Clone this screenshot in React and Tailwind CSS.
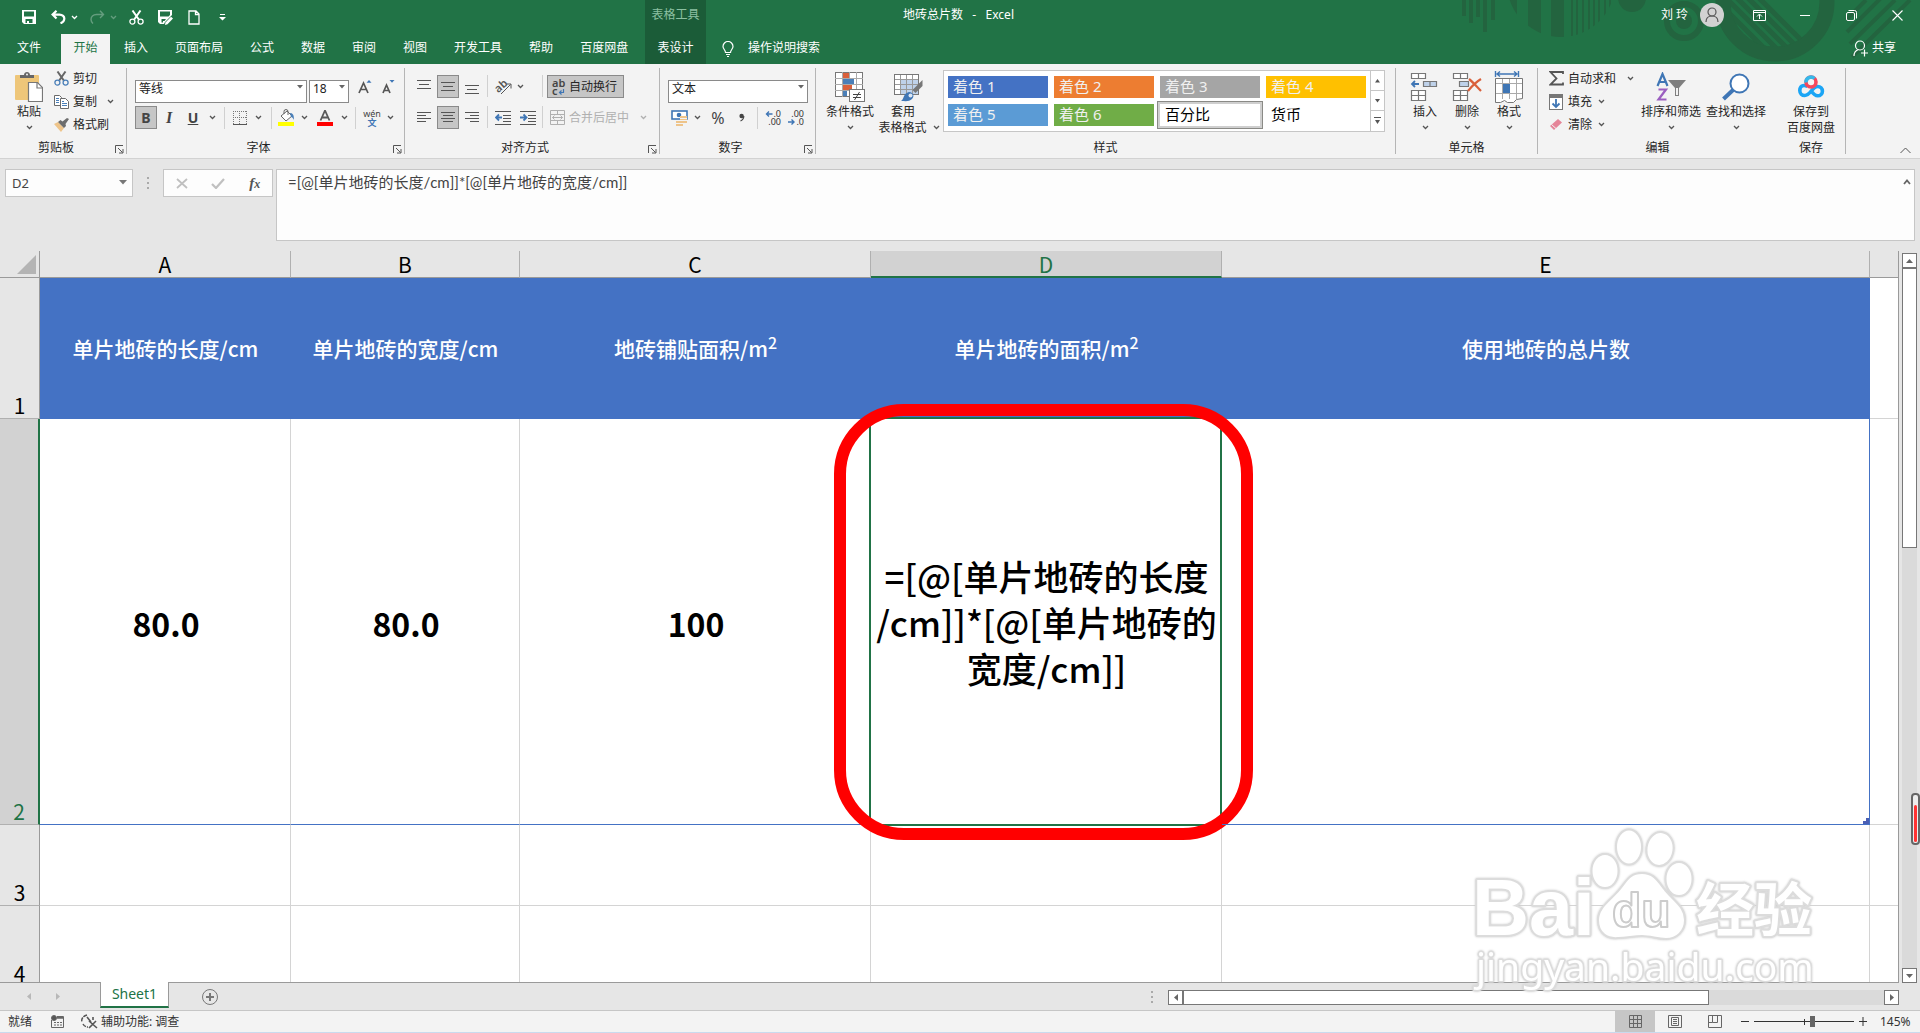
import React, { useState } from 'react';

const Chevron = ({ className = "text-[#555]" }) => (
    <svg width="7" height="5" viewBox="0 0 7 5" className={`shrink-0 ${className}`} fill="none" stroke="currentColor" strokeWidth="1.3">
        <path d="M1 1l2.5 2.5L6 1" />
    </svg>
);

const Sep = ({ className = "" }) => (
    <div className={`flex justify-center shrink-0 ${className}`}>
        <div className="w-px h-[22px] bg-[#d0d0d0]" />
    </div>
);

const IconButton = ({ label, className = "", children }) => (
    <button type="button" aria-label={label} className={`flex items-center justify-center h-[23px] shrink-0 ${className}`}>
        {children}
    </button>
);

const Group = ({ name, launcher, className = "", children }) => (
    <section aria-label={name} className={`flex shrink-0 ${className}`}>
        <div className="flex flex-col flex-1 pt-[3px]">
            <div className="flex h-[69px]">{children}</div>
            <div className="flex h-[22px]">
                <h2 className="flex-1 text-center text-xs leading-6">{name}</h2>
                {launcher && (
                    <button type="button" aria-label={`${name}设置`} className="w-[14px] pl-[3px] pt-1">
                        <svg width="9" height="9" viewBox="0 0 9 9" fill="none" stroke="#555">
                            <path d="M.5 8V.5H8M3 3l4.5 4.5M8 4v4H4" />
                        </svg>
                    </button>
                )}
            </div>
        </div>
        <div className="w-px h-[86px] mt-1 bg-[#b5b5b5]" />
    </section>
);

const BigButton = ({ icon, label, second, chevron = true, className = "" }) => (
    <button type="button" className={`flex flex-col items-center pt-[5px] text-xs leading-4 whitespace-nowrap shrink-0 ${className}`}>
        <span className="flex h-[30px] items-center mb-0.5">{icon}</span>
        <span>{label}</span>
        <span className="flex items-center h-[15px] gap-1.5">
            {second}
            {chevron && <Chevron />}
        </span>
    </button>
);

const SmallButton = ({ icon, label, chevronGap }) => (
    <button type="button" className="flex items-center h-[23px] text-xs text-left whitespace-nowrap">
        <span className="flex w-[19px] shrink-0">{icon}</span>
        {label}
        {chevronGap && <span className={chevronGap}><Chevron /></span>}
    </button>
);

/* ---------- icons ---------- */

const Scissors = ({ blade = "#666", ring = "#4a7fb8" }) => (
    <svg width="15" height="15" viewBox="0 0 15 15" fill="none">
        <path d="M3.5 0.5L9.8 9.5M11.5 0.5L5.2 9.5" stroke={blade} strokeWidth="2" />
        <circle cx="3.4" cy="11.6" r="2.5" stroke={ring} strokeWidth="1.3" />
        <circle cx="11.6" cy="11.6" r="2.5" stroke={ring} strokeWidth="1.3" />
    </svg>
);

const SaveIcon = () => (
    <svg width="14" height="14" viewBox="0 0 14 14">
        <path fillRule="evenodd" fill="#fff" d="M0 0h14v14H2l-2-2zM2 1.500v5h10v-5zM3.500 9v4h1.500v-2h2v2h3.500V9z" />
    </svg>
);

const SaveAsIcon = () => (
    <svg width="15" height="15" viewBox="0 0 15 15">
        <path fillRule="evenodd" fill="#fff" d="M0 0h14v5L7 12l-1 2H2l-2-2zM2 1.500v5h8.500L12 5V1.500zM3.500 9v3.500h1.500v-1.500h1.500L8 9z" />
        <path fill="#fff" d="M7.500 12.500l5.500-5.700L15 8.600 9.500 14.200 7 15z" />
    </svg>
);

const UndoIcon = ({ flip, className = "" }) => (
    <svg width="15" height="14" viewBox="0 0 15 14" fill="none" stroke="#fff" strokeWidth={flip ? 1.4 : 2.2} className={className}>
        {flip ? <path d="M10 .8l3.5 3.7L10 8M13.5 4.5H6.5C3 4.5 1 7 1 9.5c0 1.5.8 3 2 4" /> : <path d="M5.5 .8L1.6 4.6l3.9 3.9M2 4.6h6.5c3 0 5 2 4.8 4.4-.2 2-1.5 3.5-3.8 4.3" />}
    </svg>
);

const PasteIcon = () => (
    <svg width="28" height="30" viewBox="0 0 28 30">
        <rect x="0" y="3" width="24" height="25" rx="1" fill="#eec679" />
        <path d="M5 6V3h4c0-2 1.5-3 3-3s3 1 3 3h4v3z" fill="#666" />
        <circle cx="12" cy="2.6" r="1" fill="#f3f3f3" />
        <path d="M13.5 10.5h9l5 5v14h-14z" fill="#fff" stroke="#777" strokeWidth="1.2" />
        <path d="M22 10.5v5.5h5.5" fill="none" stroke="#777" strokeWidth="1.2" />
    </svg>
);

const CopyIcon = () => (
    <svg width="15" height="14" viewBox="0 0 15 14" fill="#fff" stroke="#6a6a6a">
        <path d="M.5 .5h5l2 2v8h-7z" />
        <path d="M6.5 3.500h5l3 3v7h-8z" />
        <path d="M2 3.500h3M2 5.500h3M2 7.500h3M8 8.500h5M8 10.500h5M8 6.500h2" stroke="#4a7fb8" />
    </svg>
);

const BrushIcon = () => (
    <svg width="16" height="14" viewBox="0 0 16 14">
        <path d="M0 6l4-2 6 6-3 4z" fill="#eec48a" />
        <path d="M4 4l2.500-2 2 1.500L13 0l2 1-3.500 5 .5 2-2 2z" fill="#6d6d6d" />
    </svg>
);

// each entry is a line: left edge, width, top
const alignments = {
    top: [[0, 14, 1], [2, 10, 5], [0, 14, 9]],
    middle: [[0, 14, 3], [2, 10, 7], [0, 14, 11]],
    bottom: [[0, 14, 6], [2, 10, 10], [0, 14, 14]],
    left: [[0, 14, 2], [0, 9, 5], [0, 14, 8], [0, 9, 11]],
    center: [[0, 14, 2], [2, 10, 5], [0, 14, 8], [2, 10, 11]],
    right: [[0, 14, 2], [5, 9, 5], [0, 14, 8], [5, 9, 11]],
};

const AlignIcon = ({ kind }) => (
    <svg width="14" height="15" viewBox="0 0 14 15" fill="#555">
        {alignments[kind].map(([x, w, y]) => <rect key={y} x={x} y={y} width={w} height="1" />)}
    </svg>
);

const IndentIcon = ({ right }) => (
    <svg width="16" height="14" viewBox="0 0 16 14" fill="none" stroke="#555">
        <path d="M0 .5h16M8 4.500h8M8 7.500h8M8 10.500h8M0 13.500h16" />
        <path d={right ? "M0 6.500h6M3.500 3.500l3 3-3 3" : "M1 6.500h6M4 3.500l-3 3 3 3"} stroke="#3f76b5" strokeWidth="1.800" />
    </svg>
);

const OrientIcon = () => (
    <svg width="17" height="16" viewBox="0 0 17 16">
        <text x="1" y="12" fontSize="11" fontWeight="600" fill="#555" transform="rotate(-42 5 10)">ab</text>
        <path d="M6 15L15.500 5.500M11.500 5h4.500v4.500" fill="none" stroke="#555" />
    </svg>
);

const WrapIcon = () => (
    <span className="relative flex flex-col w-[13px] text-[11px] leading-[8px] font-semibold text-[#444] text-left">
        <span>ab</span>
        <span>c</span>
        <svg width="7" height="6" viewBox="0 0 7 6" fill="none" className="absolute right-0 bottom-0">
            <path d="M5.500 0v3.500H1.500M3.500 1.500l-2 2 2 2" stroke="#3f76b5" strokeWidth="1.200" />
        </svg>
    </span>
);

const MergeIcon = () => (
    <svg width="15" height="15" viewBox="0 0 15 15" fill="none" stroke="#b0b0b0">
        <path d="M.5 .5h14v14H.5zM.5 4.500h14M.5 10.500h14M7.500 .5v4M7.500 10.500v4M2.500 7.500h10M4.500 5.500l-2 2 2 2M10.500 5.500l2 2-2 2" />
    </svg>
);

const BordersIcon = () => (
    <svg width="14" height="14" viewBox="0 0 14 14" fill="none" stroke="#777">
        <path d="M.5 0v13M13.500 0v13M6.500 0v13M0 .5h14M0 6.500h14" strokeDasharray="1 1" />
        <path d="M0 13.500h14" stroke="#555" />
    </svg>
);

const FillIcon = () => (
    <svg width="17" height="17" viewBox="0 0 17 17">
        <path d="M3 7l6-5 5 5-6 5z" fill="#fff" stroke="#666" />
        <path d="M6 5V2.500a2 2 0 014 0V6" fill="none" stroke="#666" />
        <path d="M12 4c3 0 4 2 4 7-1-2-2-3-3-3z" fill="#4a7fb8" />
        <rect x="0" y="13" width="16" height="4" fill="#ff0" />
    </svg>
);

const FontColorIcon = () => (
    <svg width="16" height="16" viewBox="0 0 16 16">
        <path d="M3.500 10.500L8 .5l4.500 10M5 7.500h6" fill="none" stroke="#5a5a5a" strokeWidth="1.800" />
        <rect y="12" width="16" height="4" fill="#f00" />
    </svg>
);

const FontSizeIcon = ({ small }) => (
    <svg width="14" height="15" viewBox="0 0 14 15">
        <path d={small ? "M1 14L4.500 6 8 14M2.500 11.500h4" : "M1 14L5.500 4 10 14M2.500 10.500h6"} fill="none" stroke="#555" strokeWidth="1.700" />
        <path d={small ? "M7.500 1h5L10 3.800z" : "M8.500 3.800L11 1l2.500 2.800z"} fill="#3f76b5" />
    </svg>
);

const PhoneticIcon = () => (
    <span className="flex flex-col items-center">
        <span className="text-[9px] leading-[9px] text-[#444]">wén</span>
        <span className="text-[9px] leading-[9px] font-bold text-[#3f76b5]">文</span>
    </span>
);

const CurrencyIcon = () => (
    <svg width="17" height="16" viewBox="0 0 17 16">
        <rect x="1" y="1" width="15" height="8" fill="#fff" stroke="#3f76b5" strokeWidth="1.600" />
        <circle cx="8" cy="5" r="2.300" fill="#3f76b5" />
        <path d="M9 6h7v7h-4v3H5v-5h4z" fill="#eec48a" />
        <path d="M9 8.500h7M9 10.500h7M5 13.500h7" stroke="#f3f3f3" />
    </svg>
);

const DecimalIcon = ({ less }) => (
    <span className="relative flex flex-col items-end w-4 text-[9px] leading-[8px] text-[#333]">
        <span>{less ? ".00" : ".0"}</span>
        <span>{less ? ".0" : ".00"}</span>
        <svg width="8" height="6" viewBox="0 0 8 6" fill="none" className={less ? "absolute left-0 bottom-px" : "absolute left-0 top-px"}>
            <path d={less ? "M0 3h6M3.500 .5L6 3 3.500 5.500" : "M1.500 3h6M4 .5L1.500 3 4 5.500"} stroke="#3f76b5" strokeWidth="1.400" />
        </svg>
    </span>
);

const CondIcon = () => (
    <svg width="30" height="30" viewBox="0 0 30 30">
        <rect x=".5" y=".5" width="27" height="24" fill="#fff" stroke="#777" />
        <path d="M7.500 0v25M14.500 0v25M21.500 0v25M0 6.500h28M0 12.500h28M0 18.500h28" stroke="#aaa" />
        <path d="M8 1h6v5H8zM8 13h9v5H8z" fill="#d9603b" />
        <path d="M8 7h11v5H8zM8 19h4v5H8z" fill="#4a7fb8" />
        <rect x="14.500" y="17.500" width="15" height="12" fill="#fff" stroke="#777" />
        <path d="M18 22.500h8M18 25.500h8M24.500 20l-5 8" stroke="#444" />
    </svg>
);

const TableFormatIcon = () => (
    <svg width="30" height="30" viewBox="0 0 30 30">
        <rect x=".5" y="2.500" width="24" height="20" fill="#fff" stroke="#777" />
        <rect x="7" y="8" width="17" height="14" fill="#bfd2ea" />
        <path d="M6.500 3v19M12.500 3v19M18.500 3v19M1 7.500h23M1 12.500h23M1 17.500h23" stroke="#999" />
        <path d="M28.500 8v6l-7 7-3-3z" fill="#777" />
        <path d="M7 29c3-1 2-8 8-9 4 0 6 4 3 7-3 3-7 2-11 2z" fill="#3f76b5" />
        <circle cx="16.500" cy="23.500" r="2" fill="#dbe6f3" />
    </svg>
);

const CellsIcon = ({ kind }) => {
    if (kind === "format") return (
        <svg width="30" height="32" viewBox="0 0 30 32" fill="none">
            <path d="M1.500 0v6M24.500 0v6M3 3h20M6 .5L3 3l3 2.500M20 .5L23 3l-3 2.500" stroke="#3f76b5" strokeWidth="1.400" />
            <path d="M1.500 7.500h27v20l-6 1-3 3h-6l-3-2-4 2h-5z" fill="#fff" stroke="#777" />
            <path d="M8.500 8v20M15.500 8v20M22.500 8v20M2 12.500h26M2 22.500h26" stroke="#aaa" />
            <rect x="9" y="13" width="7" height="9" fill="#3f76b5" />
        </svg>
    );
    return (
        <svg width="30" height="30" viewBox="0 0 30 30" fill="#fff" stroke="#777" strokeWidth="1.200">
            <path d="M1.500 1.500h14v5h-14zM8.500 1.500v5M1.500 18.500h14v10h-14zM8.500 18.500v10M1.500 23.500h14" />
            {kind === "insert" ? (
                <>
                    <path d="M13.500 9.500h13v5h-13zM20 9.500v5" fill="#bfd2ea" />
                    <path d="M2 12h7M5 9l-3 3 3 3" fill="none" stroke="#3f76b5" strokeWidth="1.800" />
                </>
            ) : (
                <>
                    <path d="M7.500 9.500h9v5h-9z" fill="#bfd2ea" />
                    <path d="M17 7c4 3 8 8 12 12M29 7c-5 3-9 7-13 12" fill="none" stroke="#d9603b" strokeWidth="2.200" />
                </>
            )}
        </svg>
    );
};

const SigmaIcon = () => (
    <svg width="15" height="15" viewBox="0 0 15 15" fill="none" stroke="#555" strokeWidth="1.800">
        <path d="M14 3V1H1.500l6 6.500-6 6H14v-2" />
    </svg>
);

const FillDownIcon = () => (
    <svg width="14" height="16" viewBox="0 0 14 16" fill="none">
        <rect x=".5" y=".5" width="13" height="15" fill="#fff" stroke="#777" />
        <rect width="14" height="4" fill="#777" />
        <path d="M7 5v8M3.500 9.500L7 13l3.500-3.500" stroke="#3f76b5" strokeWidth="1.800" />
    </svg>
);

const EraserIcon = () => (
    <svg width="14" height="14" viewBox="0 0 14 14">
        <path d="M1 8l8-7 4 3.500L5 12z" fill="#e58498" />
        <path d="M2.500 6.500l4.500 4" stroke="#f3f3f3" />
    </svg>
);

const SortIcon = () => (
    <svg width="30" height="30" viewBox="0 0 30 30" fill="none">
        <path d="M1.500 14L6.500 2l5 12M3.500 10h6" stroke="#3f76b5" strokeWidth="2.200" />
        <path d="M2.500 17.500h7.500L2.500 27.500h8" stroke="#9b5fc0" strokeWidth="2.200" />
        <path d="M12 8h18l-7 8v8h-4v-8z" fill="#7f7f7f" />
        <path d="M20 16h2v7h-2z" fill="#f3f3f3" />
    </svg>
);

const FindIcon = () => (
    <svg width="28" height="28" viewBox="0 0 28 28" fill="none" stroke="#3f76b5">
        <path d="M11 17L1.500 26" strokeWidth="4" />
        <circle cx="17.500" cy="10.500" r="9" fill="#fff" strokeWidth="2" />
    </svg>
);

const NetdiskIcon = () => (
    <svg width="28" height="26" viewBox="0 0 28 26" fill="none" strokeWidth="3.600">
        <path d="M10.500 12.500C6 10 2.800 12.500 2.800 16.500c0 3 2.200 5 4.900 5 6 0 7-9 13-9 2.700 0 4.700 2 4.700 4.700 0 2.600-2 4.600-4.700 4.600-3 0-5-2.600-6.700-5" stroke="#1ba5f5" />
        <circle cx="14" cy="8" r="5" stroke="#f5485c" />
        <path d="M9 8.500A5 5 0 0117.500 4.500" stroke="#35b8ea" />
    </svg>
);

const HeaderPattern = () => (
    <svg width="480" height="64" viewBox="0 0 480 64" className="absolute right-0 top-0" fill="#23643f" stroke="none" aria-hidden="true">
        <clipPath id="disc"><circle cx="121" cy="-17" r="54" /></clipPath>
        <clipPath id="ring"><circle cx="335" cy="2" r="45" /></clipPath>
        <path d="M22 0h4v16h-4zM29 0h4v23h-4zM36 0h4v17h-4zM43 0h4v32h-4zM51 0h4v20h-4z" />
        <path clipPath="url(#disc)" d="M67 0h10v40H67zM88 0h13v40H88zM111 0h13v40h-13zM131 0h2v40h-2zM136 0h2v40h-2zM142 0h2v40h-2zM148 0h2v40h-2zM153 0h2v40h-2zM158 0h2v40h-2zM164 0h2v40h-2zM169 0h2v40h-2z" />
        <circle cx="192" cy="-2" r="14" />
        <circle cx="244" cy="21" r="8" />
        <g fill="none" stroke="#23643f">
            <circle cx="244" cy="21" r="17" strokeWidth="6" />
            <circle cx="335" cy="2" r="52" strokeWidth="15" />
            <path clipPath="url(#ring)" d="M276 0l60 60M286 -2l60 60M297 -2l60 60M308 -2l60 60M319 -2l60 60" strokeWidth="5" />
            <path d="M426 0l-20 20M455 0l-45 44M470 0l-58 57M443 -4l-36 36" strokeWidth="4" />
        </g>
    </svg>
);

/* ---------- header ---------- */

const TitleBar = () => (
    <div className="flex h-[34px] text-xs">
        <div className="flex items-center w-[645px] h-[34px] pl-[22px]">
            <button type="button" aria-label="保存" className="w-[29px]"><SaveIcon /></button>
            <button type="button" aria-label="撤消" className="w-[20px]"><UndoIcon /></button>
            <button type="button" aria-label="撤消选项" className="w-[19px]"><Chevron className="text-white" /></button>
            <button type="button" aria-label="恢复" className="w-[20px]"><UndoIcon flip className="opacity-30" /></button>
            <button type="button" aria-label="恢复选项" className="w-[19px]"><Chevron className="text-white/30" /></button>
            <button type="button" aria-label="剪切" className="w-[29px]"><Scissors blade="#fff" ring="#fff" /></button>
            <button type="button" aria-label="另存为" className="w-[30px]"><SaveAsIcon /></button>
            <button type="button" aria-label="新建" className="w-[31px]">
                <svg width="12" height="15" viewBox="0 0 12 15" fill="none" stroke="#fff" strokeWidth="1.300">
                    <path d="M1 1h7l3 3v10H1zM7.500 1v3.500H11" />
                </svg>
            </button>
            <button type="button" aria-label="自定义快速访问工具栏">
                <svg width="7" height="7" viewBox="0 0 7 7" fill="#fff"><path d="M1 0h5v1H1zM0 3h7L3.500 6.500z" /></svg>
            </button>
        </div>
        <div className="w-[61px] bg-[#1b5c38] text-[#8cc0a2] text-center leading-[30px]">表格工具</div>
        <div className="flex-1 pl-[197px] leading-[30px] text-white whitespace-pre">地砖总片数   -   Excel</div>
        <div className="flex items-center h-[30px] text-white">
            <span className="mr-3">刘 玲</span>
            <button type="button" aria-label="帐户" className="flex items-center justify-center w-6 h-6 mr-3 rounded-full bg-[#d2d2d2]">
                <svg width="14" height="16" viewBox="0 0 14 16" fill="none" stroke="#555" strokeWidth="1.200">
                    <circle cx="7" cy="5" r="4" /><path d="M1 15c0-4 2.500-6 6-6s6 2 6 6" />
                </svg>
            </button>
            <button type="button" aria-label="功能区显示选项" className="flex justify-center w-[46px]">
                <svg width="13" height="11" viewBox="0 0 13 11" fill="none" stroke="#fff"><path d="M.5 .5h12v10H.5zM.5 2.500h12M6.500 9V4.500M4 6.500L6.500 4 9 6.500" /></svg>
            </button>
            <button type="button" aria-label="最小化" className="flex justify-center w-[46px]">
                <svg width="10" height="1"><rect width="10" height="1" fill="#fff" /></svg>
            </button>
            <button type="button" aria-label="向下还原" className="flex justify-center w-[46px]">
                <svg width="11" height="11" viewBox="0 0 11 11" fill="none" stroke="#fff"><rect x=".5" y="2.500" width="8" height="8" rx="1.500" /><path d="M2.500 .5h6a2 2 0 012 2v6" /></svg>
            </button>
            <button type="button" aria-label="关闭" className="flex justify-center w-[46px]">
                <svg width="11" height="11" viewBox="0 0 11 11" stroke="#fff" strokeWidth="1.100"><path d="M.5 .5l10 10M10.500 .5l-10 10" /></svg>
            </button>
        </div>
    </div>
);

const tabs = ["插入", "页面布局", "公式", "数据", "审阅", "视图", "开发工具", "帮助", "百度网盘"];

const TabBar = () => (
    <nav className="flex h-[30px] text-xs leading-6 text-white">
        <button type="button" className="w-[61px] pr-[3px] pb-0.5">文件</button>
        <button type="button" className="w-[49px] mr-0.5 pb-0.5 bg-[#f3f3f3] text-[#217346]">开始</button>
        <div className="flex w-[533px] gap-[3px]">
            {tabs.map((t) => <button type="button" key={t} className="px-3 pb-0.5 shrink-0">{t}</button>)}
        </div>
        <button type="button" className="w-[61px] pb-0.5 bg-[#1b5c38]">表设计</button>
        <label htmlFor="tellme" className="flex items-center ml-4">
            <svg width="12" height="16" viewBox="0 0 12 16" fill="none" stroke="#fff" strokeWidth="1.200">
                <path d="M3.500 11.500C3.500 9 1 8 1 5.500a5 5 0 0110 0C11 8 8.500 9 8.500 11.500zM4 13.500h4M5 15.500h2" />
            </svg>
        </label>
        <input id="tellme" aria-label="操作说明搜索" placeholder="操作说明搜索" className="w-[180px] ml-[14px] pb-0.5 bg-transparent outline-none placeholder:text-white" />
        <button type="button" className="flex items-center gap-1 ml-auto mr-6 pb-0.5">
            <svg width="15" height="17" viewBox="0 0 15 17" fill="none" stroke="#fff" strokeWidth="1.200">
                <circle cx="7" cy="5.500" r="4.500" /><path d="M1 16c0-3.500 1.500-5.500 4.500-6.500M11.500 9.500v7M8 13h7" />
            </svg>
            共享
        </button>
    </nav>
);

/* ---------- ribbon ---------- */

const swatches = [
    { name: "着色 1", style: "bg-[#4472c4] text-[#f0f0f0]" },
    { name: "着色 2", style: "bg-[#ed7d31] text-[#f0f0f0]" },
    { name: "着色 3", style: "bg-[#a5a5a5] text-[#f0f0f0]" },
    { name: "着色 4", style: "bg-[#ffc000] text-[#f0f0f0]" },
    { name: "着色 5", style: "bg-[#5b9bd5] text-[#f0f0f0]" },
    { name: "着色 6", style: "bg-[#70ad47] text-[#f0f0f0]" },
    { name: "百分比", style: "bg-white text-black ring-2 ring-[#cfcfcf] outline outline-[#8a8a86] outline-offset-2" },
    { name: "货币", style: "bg-white text-black" },
];

const pressed = "w-[22px] bg-[#c6c6c6] border border-[#8a8a8a]";

const Combo = ({ label, value, className }) => (
    <div className={`relative h-[23px] ${className}`}>
        <select aria-label={label} defaultValue={value} className="w-full h-full pl-[3px] pb-1 bg-white border border-[#8a8a8a] text-xs leading-4 text-[#222] appearance-none">
            <option>{value}</option>
        </select>
        <svg width="6" height="4" className="absolute right-1 top-[10px] pointer-events-none"><path d="M0 0h6L3 3.500z" fill="#666" /></svg>
    </div>
);

const Ribbon = () => (
    <div className="flex h-[95px] bg-[#f3f3f3] border-b border-[#d2d2d2] text-[#262626]">
        <Group name="剪贴板" launcher className="w-[127px]">
            <BigButton icon={<PasteIcon />} label="粘贴" className="w-[34px] ml-3" />
            <div className="flex flex-col ml-2">
                <SmallButton icon={<Scissors />} label="剪切" />
                <SmallButton icon={<CopyIcon />} label="复制" chevronGap="ml-2.5" />
                <SmallButton icon={<BrushIcon />} label="格式刷" />
            </div>
        </Group>

        <Group name="字体" launcher className="w-[278px]">
            <div className="flex flex-col gap-2 pt-2 pl-2">
                <div className="flex">
                    <Combo label="字体" value="等线" className="w-[172px] mr-0.5" />
                    <Combo label="字号" value="18" className="w-10 mr-1.5" />
                    <IconButton label="增大字号" className="w-5"><FontSizeIcon /></IconButton>
                    <IconButton label="减小字号" className="w-7"><FontSizeIcon small /></IconButton>
                </div>
                <div className="flex items-center text-[#444]">
                    <IconButton label="加粗" className={pressed}><b className="text-sm leading-4">B</b></IconButton>
                    <IconButton label="倾斜" className="w-6"><i className="text-base leading-4 font-semibold font-['Liberation_Serif',serif]">I</i></IconButton>
                    <IconButton label="下划线" className="w-6"><u className="text-sm font-bold">U</u></IconButton>
                    <IconButton label="下划线选项" className="w-3.5"><Chevron /></IconButton>
                    <Sep className="w-[11px]" />
                    <IconButton label="边框" className="w-5"><BordersIcon /></IconButton>
                    <IconButton label="边框选项" className="w-4"><Chevron /></IconButton>
                    <Sep className="w-2.5" />
                    <IconButton label="填充颜色" className="w-5"><FillIcon /></IconButton>
                    <IconButton label="填充选项" className="w-4"><Chevron /></IconButton>
                    <IconButton label="字体颜色" className="w-[26px]"><FontColorIcon /></IconButton>
                    <IconButton label="颜色选项" className="w-3"><Chevron /></IconButton>
                    <Sep className="w-2.5" />
                    <IconButton label="拼音" className="w-6"><PhoneticIcon /></IconButton>
                    <IconButton label="拼音选项" className="w-3"><Chevron /></IconButton>
                </div>
            </div>
        </Group>

        <Group name="对齐方式" launcher className="w-[255px]">
            <div className="flex flex-col gap-2 pt-2 pl-2">
                <div className="flex gap-0.5">
                    <IconButton label="顶端对齐" className="w-[22px]"><AlignIcon kind="top" /></IconButton>
                    <IconButton label="垂直居中" className={pressed}><AlignIcon kind="middle" /></IconButton>
                    <IconButton label="底端对齐" className="w-[22px]"><AlignIcon kind="bottom" /></IconButton>
                    <Sep className="w-1" />
                    <IconButton label="方向" className="w-6"><OrientIcon /></IconButton>
                    <button type="button" aria-label="方向选项" className="flex items-center w-[22px]"><Chevron /></button>
                    <Sep className="w-0.5" />
                    <button type="button" className="flex items-center gap-1 w-[77px] h-[23px] pl-1 ml-0.5 bg-[#c6c6c6] border border-[#8a8a8a] text-xs whitespace-nowrap">
                        <WrapIcon />自动换行
                    </button>
                </div>
                <div className="flex gap-0.5">
                    <IconButton label="左对齐" className="w-[22px]"><AlignIcon kind="left" /></IconButton>
                    <IconButton label="居中" className={pressed}><AlignIcon kind="center" /></IconButton>
                    <IconButton label="右对齐" className="w-[22px]"><AlignIcon kind="right" /></IconButton>
                    <Sep className="w-1" />
                    <IconButton label="减少缩进量" className="w-6"><IndentIcon /></IconButton>
                    <IconButton label="增加缩进量" className="w-[22px]"><IndentIcon right /></IconButton>
                    <Sep className="w-0.5" />
                    <button type="button" className="flex items-center h-[23px] pl-[5px] text-xs text-[#b0b0b0] whitespace-nowrap">
                        <span className="mr-1"><MergeIcon /></span>合并后居中
                        <span className="ml-[11px]"><Chevron className="text-[#b0b0b0]" /></span>
                    </button>
                </div>
            </div>
        </Group>

        <Group name="数字" launcher className="w-[156px]">
            <div className="flex flex-col gap-2 pt-2 pl-2">
                <Combo label="数字格式" value="文本" className="w-[140px]" />
                <div className="flex items-center text-[#444]">
                    <IconButton label="会计数字格式" className="w-[22px]"><CurrencyIcon /></IconButton>
                    <IconButton label="会计选项" className="w-3.5"><Chevron /></IconButton>
                    <IconButton label="百分比样式" className="w-7"><span className="text-base leading-4">%</span></IconButton>
                    <IconButton label="千位分隔样式" className="w-5">
                        <svg width="6" height="10" viewBox="0 0 6 10" fill="#444"><circle cx="2.600" cy="3" r="2.200" /><path d="M4.800 3c0 2.500-1 4-3.300 5" fill="none" stroke="#444" strokeWidth="1.200" /></svg>
                    </IconButton>
                    <Sep className="w-2.5" />
                    <IconButton label="增加小数位数" className="w-[22px]"><DecimalIcon /></IconButton>
                    <IconButton label="减少小数位数" className="w-6"><DecimalIcon less /></IconButton>
                </div>
            </div>
        </Group>

        <Group name="样式" className="w-[580px]">
            <BigButton icon={<CondIcon />} label="条件格式" className="w-[52px] ml-2" />
            <BigButton
                icon={<TableFormatIcon />}
                label={<span className="pr-3">套用</span>}
                second="表格格式"
                className="w-[62px] ml-0.5"
            />
            <div className="flex h-[62px] mt-[3px] ml-[3px] bg-white border border-[#c6c6c6]">
                <div className="grid grid-cols-4 gap-x-1.5 gap-y-1.5 pl-1 pt-[5px] pr-1 content-start">
                    {swatches.map((s) => (
                        <button type="button" key={s.name} className={`w-[100px] h-[22px] pl-[5px] pb-1 text-left text-[15px] leading-5 ${s.style}`}>
                            {s.name}
                        </button>
                    ))}
                </div>
                <div className="flex flex-col w-[14px] border-l border-[#c6c6c6] bg-white">
                    <button type="button" aria-label="上一行" className="flex items-center justify-center h-5 border-b border-[#c6c6c6]">
                        <svg width="5" height="4"><path d="M0 3.500L2.500 0 5 3.500z" fill="#555" /></svg>
                    </button>
                    <button type="button" aria-label="下一行" className="flex items-center justify-center h-5 border-b border-[#c6c6c6]">
                        <svg width="5" height="4"><path d="M0 0h5L2.500 3.500z" fill="#555" /></svg>
                    </button>
                    <button type="button" aria-label="其他" className="flex items-center justify-center h-5">
                        <svg width="7" height="8"><path d="M0 0h7v1H0zM1 3h5L3.500 7z" fill="#555" /></svg>
                    </button>
                </div>
            </div>
        </Group>

        <Group name="单元格" className="w-[142px]">
            <div className="flex pl-2">
                <BigButton icon={<CellsIcon kind="insert" />} label="插入" className="w-[42px]" />
                <BigButton icon={<CellsIcon kind="delete" />} label="删除" className="w-[42px]" />
                <BigButton icon={<CellsIcon kind="format" />} label="格式" className="w-[42px]" />
            </div>
        </Group>

        <Group name="编辑" className="w-[239px]">
            <div className="flex flex-col w-[98px] ml-[11px]">
                <SmallButton icon={<SigmaIcon />} label="自动求和" chevronGap="ml-[11px]" />
                <SmallButton icon={<FillDownIcon />} label="填充" chevronGap="ml-1.5" />
                <SmallButton icon={<EraserIcon />} label="清除" chevronGap="ml-1.5" />
            </div>
            <BigButton icon={<SortIcon />} label="排序和筛选" className="w-[48px]" />
            <BigButton icon={<FindIcon />} label="查找和选择" className="w-[82px]" />
        </Group>

        <Group name="保存" className="w-[69px]">
            <BigButton icon={<NetdiskIcon />} label="保存到" second="百度网盘" chevron={false} className="w-[68px]" />
        </Group>

        <div className="flex items-end justify-end flex-1 pr-[9px] pb-1">
            <button type="button" aria-label="折叠功能区">
                <svg width="11" height="7" viewBox="0 0 11 7" fill="none" stroke="#555"><path d="M.5 6l5-5 5 5" /></svg>
            </button>
        </div>
    </div>
);

/* ---------- formula bar ---------- */

const FormulaBar = ({ formula, setFormula }) => (
    <div className="flex items-start h-[92px] pt-[10px] px-[5px] text-[#444]">
        <div className="relative w-[128px] h-7">
            <input aria-label="名称框" defaultValue="D2" className="w-full h-full pl-1.5 bg-[#fdfdfd] border border-[#c6c6c6] text-[13px]" />
            <svg width="8" height="5" className="absolute right-1.5 top-[11px] pointer-events-none"><path d="M0 0h8L4 4.500z" fill="#777" /></svg>
        </div>
        <svg width="2" height="12" className="mx-[14px] mt-2 shrink-0" fill="#aaa"><path d="M0 0h2v2H0zM0 5h2v2H0zM0 10h2v2H0z" /></svg>
        <div className="flex items-center justify-around w-[110px] h-7 bg-[#fdfdfd] border border-[#c6c6c6]">
            <button type="button" aria-label="取消">
                <svg width="12" height="11" viewBox="0 0 12 11" stroke="#c0c0c0" strokeWidth="1.800"><path d="M1 1l10 9M11 1L1 10" /></svg>
            </button>
            <button type="button" aria-label="输入">
                <svg width="14" height="11" viewBox="0 0 14 11" fill="none" stroke="#c0c0c0" strokeWidth="2.200"><path d="M1 6l4 4 8-9" /></svg>
            </button>
            <button type="button" aria-label="插入函数" className="font-['Liberation_Serif',serif] italic font-bold text-[15px] leading-4 text-[#555]">f<span className="text-xs">x</span></button>
        </div>
        <div className="relative flex flex-1 h-[72px] ml-[3px]">
            <textarea
                aria-label="编辑栏"
                value={formula}
                onChange={(e) => setFormula(e.target.value)}
                className="w-full h-full py-0.5 pl-[11px] bg-[#fdfdfd] border border-[#c6c6c6] text-[15px] leading-5 resize-none outline-none font-['Lato','Noto_Sans_CJK_SC',sans-serif]"
            />
            <button type="button" aria-label="折叠编辑栏" className="absolute right-1 top-2.5">
                <svg width="8" height="6" viewBox="0 0 8 6" fill="none" stroke="#666" strokeWidth="1.800"><path d="M1 5l3-3.500L7 5" /></svg>
            </button>
        </div>
    </div>
);

/* ---------- sheet ---------- */

const columns = ["A", "B", "C", "D", "E"];

const RowHead = ({ n, active }) => (
    <th
        scope="row"
        className={`align-bottom pb-[3px] font-normal leading-5 border-b border-b-[#b0b0b0] ${active ? "bg-[#d2d2d2] text-[#217346] border-r-2 border-r-[#217346]" : "bg-[#e6e6e6] border-r border-r-[#9a9a9a]"}`}
    >
        {n}
    </th>
);

const Watermark = () => (
    <svg width="352" height="180" viewBox="0 0 352 180" className="absolute right-[98px] -bottom-3.5 pointer-events-none drop-shadow-[0_0_1px_#ccc]" fill="#fff" stroke="#dcdcdc" strokeWidth="2" strokeLinejoin="round" aria-hidden="true">
        <g fontWeight="700" style={{ paintOrder: "stroke" }}>
            <text x="2" y="118" fontSize="79" className="font-['Liberation_Sans',sans-serif]" strokeWidth="4">Bai</text>
            <text x="226" y="114" fontSize="58" className="font-['Noto_Sans_CJK_SC',sans-serif]" strokeWidth="4">经验</text>
        </g>
        <ellipse cx="135" cy="54" rx="13.500" ry="17" />
        <ellipse cx="159" cy="30" rx="13" ry="17.500" />
        <ellipse cx="190" cy="32" rx="13.500" ry="17" transform="rotate(8 190 32)" />
        <ellipse cx="209" cy="62" rx="13.500" ry="17" />
        <path d="M172 56c-13 0-16 9-23 17-8 10-21 17-21 30 0 14 10 19 20 18 9 0 15-2 24-2s15 3 24 3c11 0 19-8 19-19 0-13-10-18-20-30-7-9-11-17-23-17z" />
        <text x="142" y="110" fontSize="48" fontWeight="700" className="font-['Liberation_Sans',sans-serif]" stroke="#ccc">du</text>
        <text x="6" y="164" fontSize="39" className="font-['Noto_Sans',sans-serif]" style={{ paintOrder: "stroke" }} strokeWidth="3">jingyan.baidu.com</text>
    </svg>
);

const titleCell = "text-center bg-[#4472c4] text-white font-medium";
const dataCell = "pt-0.5 pl-0.5 border-b border-b-[#4472c4] border-r border-r-[#d4d4d4] text-[32px] font-bold";

const Sheet = () => (
    <div className="relative flex flex-1 min-h-0">
        <div className="flex-1 overflow-hidden border-b border-r border-[#9a9a9a]">
            <table className="w-full bg-white border-separate border-spacing-0 table-fixed text-[21px] text-black font-['Noto_Sans_CJK_SC',sans-serif]">
                <colgroup>
                    <col className="w-10" />
                    <col className="w-[251px]" />
                    <col className="w-[229px]" />
                    <col className="w-[351px]" />
                    <col className="w-[351px]" />
                    <col />
                    <col className="w-7" />
                </colgroup>
                <thead>
                    <tr className="h-[27px] bg-[#e6e6e6]">
                        <td className="border-b border-r border-[#9a9a9a]">
                            <svg width="19" height="19" className="ml-auto mr-[3px]"><path d="M19 0v19H0z" fill="#b4b4b4" /></svg>
                        </td>
                        {columns.map((c) => (
                            <th
                                key={c}
                                scope="col"
                                className={`font-normal leading-6 border-r border-r-[#b0b0b0] ${c === "D" ? "bg-[#d2d2d2] text-[#217346] border-b-2 border-b-[#217346]" : "border-b border-b-[#9a9a9a]"}`}
                            >
                                {c}
                            </th>
                        ))}
                        <td className="border-b border-b-[#9a9a9a]" />
                    </tr>
                </thead>
                <tbody>
                    <tr className="h-[141px]">
                        <RowHead n="1" />
                        <td className={titleCell}>单片地砖的长度/cm</td>
                        <td className={titleCell}>单片地砖的宽度/cm</td>
                        <td className={titleCell}>地砖铺贴面积/m<sup className="text-base">2</sup></td>
                        <td className={titleCell}>单片地砖的面积/m<sup className="text-base">2</sup></td>
                        <td className={titleCell}>使用地砖的总片数</td>
                        <td className="border-b border-[#d4d4d4]" />
                    </tr>
                    <tr className="h-[406px] text-center">
                        <RowHead n="2" active />
                        <td className={dataCell}>80.0</td>
                        <td className={dataCell}>80.0</td>
                        <td className={dataCell}>100</td>
                        <td className="relative text-[35px] leading-[46px] font-medium whitespace-nowrap border-b border-[#4472c4]">
                            =[@[单片地砖的长度<br />/cm]]*[@[单片地砖的<br />宽度/cm]]
                            <div className="absolute -inset-y-0.5 -left-0.5 right-0 border-2 border-[#217346]" />
                            <div className="absolute -top-[15px] -bottom-4 -left-[37px] -right-[31px] border-[12px] border-[#f00] rounded-[70px]" />
                        </td>
                        <td className="relative border-b border-r border-[#4472c4]">
                            <svg width="6" height="6" className="absolute right-0 bottom-0"><path d="M3 0h3v6H0V3h3z" fill="#4a5fb5" /></svg>
                        </td>
                        <td className="border-b border-[#d4d4d4]" />
                    </tr>
                    {["3", "4"].map((n) => (
                        <tr key={n} className="h-[81px]">
                            <RowHead n={n} />
                            {columns.map((c) => <td key={c} className="border-b border-r border-[#d4d4d4]" />)}
                            <td className="border-b border-[#d4d4d4]" />
                        </tr>
                    ))}
                </tbody>
            </table>
        </div>
        <div className="flex flex-col w-[21px] pt-0.5 pl-[3px]">
            <div className="flex flex-col flex-1 w-[15px] bg-[#dadada]">
                <button type="button" aria-label="向上滚动" className="flex items-center justify-center h-[15px] bg-white border border-[#777]">
                    <svg width="7" height="4"><path d="M0 4l3.500-4L7 4z" fill="#666" /></svg>
                </button>
                <div className="h-[280px] bg-white border border-[#777]" />
                <button type="button" aria-label="向下滚动" className="flex items-center justify-center h-[15px] mt-auto bg-white border border-[#777]">
                    <svg width="7" height="4"><path d="M0 0h7L3.500 4z" fill="#666" /></svg>
                </button>
            </div>
        </div>
        <div className="absolute right-0 bottom-[138px] w-[9px] h-[52px] pt-[10px] pl-px bg-[#eee] border-2 border-[#666] rounded-[4px]">
            <div className="w-[3px] h-[37px] bg-[#f33] rounded-sm" />
        </div>
        <Watermark />
    </div>
);

const SheetTabs = () => (
    <div className="flex h-7 border-b border-[#c6c6c6]">
        <div className="flex items-center w-[100px] pl-[27px] gap-[25px] text-[#b8b8b8]">
            <button type="button" aria-label="上一个工作表"><svg width="4" height="7"><path d="M4 0v7L0 3.500z" fill="currentColor" /></svg></button>
            <button type="button" aria-label="下一个工作表"><svg width="4" height="7"><path d="M0 0v7l4-3.500z" fill="currentColor" /></svg></button>
        </div>
        <button type="button" className="w-[69px] h-[26px] -mt-px bg-white border-x border-x-[#9a9a9a] border-b-2 border-b-[#217346] text-[#217346] text-sm leading-5 z-10">Sheet1</button>
        <button type="button" aria-label="新工作表" className="ml-[33px]">
            <svg width="16" height="16" viewBox="0 0 16 16" fill="none" stroke="#777"><circle cx="8" cy="8" r="7.500" /><path d="M8 4v8M4 8h8" strokeWidth="2" /></svg>
        </button>
        <div className="flex items-center h-7 ml-auto mr-[21px]">
            <svg width="2" height="12" className="mr-[15px]" fill="#aaa"><path d="M0 0h2v2H0zM0 5h2v2H0zM0 10h2v2H0z" /></svg>
            <div className="flex w-[731px] h-[15px] bg-[#dadada]">
                <button type="button" aria-label="向左滚动" className="flex items-center justify-center w-[15px] bg-white border border-[#777]">
                    <svg width="4" height="7"><path d="M4 0v7L0 3.500z" fill="#666" /></svg>
                </button>
                <div className="w-[526px] bg-white border border-[#777]" />
                <button type="button" aria-label="向右滚动" className="flex items-center justify-center w-[15px] ml-auto bg-white border border-[#777]">
                    <svg width="4" height="7"><path d="M0 0v7l4-3.500z" fill="#666" /></svg>
                </button>
            </div>
        </div>
    </div>
);

const StatusBar = ({ zoom, setZoom }) => (
    <footer className="flex items-center h-[22px] bg-[#f3f3f3] border-b border-[#c9daee] text-xs text-[#333]">
        <span className="ml-2 mr-[19px]">就绪</span>
        <button type="button" aria-label="录制宏" className="mr-[17px]">
            <svg width="13" height="13" viewBox="0 0 13 13" fill="none" stroke="#666">
                <path d="M.5 5v7.500h12v-11H6M3 7.500h2M6 7.500h2M9 7.500h2M3 10h2M6 10h2M9 10h2" /><path d="M6 2.500h6" strokeWidth="2.500" /><circle cx="3" cy="3" r="2.500" fill="#555" />
            </svg>
        </button>
        <button type="button" className="flex items-center gap-[3px]">
            <svg width="17" height="15" viewBox="0 0 17 15" fill="none" stroke="#555">
                <path d="M6 1C2 2 0 5 1 8M2 10c1 2 3 3 5 3" strokeWidth="1.500" strokeDasharray="4 1" /><path d="M6 3l4 5M12 3v3M8 7l8 7M15 7l-7 7" strokeWidth="1.600" />
            </svg>
            辅助功能: 调查
        </button>
        <div className="flex items-center h-full ml-auto">
            <button type="button" aria-label="普通" className="flex items-center justify-center w-10 h-full bg-[#c6c6c6]">
                <svg width="13" height="13" viewBox="0 0 13 13" fill="none" stroke="#666"><path d="M.5 .5h12v12H.5zM4.500 0v13M8.500 0v13M0 4.500h13M0 8.500h13" /></svg>
            </button>
            <button type="button" aria-label="页面布局" className="flex items-center justify-center w-10">
                <svg width="14" height="13" viewBox="0 0 14 13" fill="none" stroke="#666"><path d="M.5 .5h13v12H.5zM3.500 2.500h7v8h-7zM5 4.500h4M5 6.500h4M5 8.500h4" /></svg>
            </button>
            <button type="button" aria-label="分页预览" className="flex items-center justify-center w-10">
                <svg width="14" height="13" viewBox="0 0 14 13" fill="none" stroke="#666"><path d="M.5 .5h13v12H.5zM4.500 0v7.500h5V0M.5 7.500h4" /></svg>
            </button>
            <button type="button" aria-label="缩小" className="ml-[6px] mr-[5px]"><svg width="8" height="9"><path d="M0 4h8v1H0z" fill="#333" /></svg></button>
            <div className="relative flex">
                <div className="absolute left-[50px] top-[5px] w-px h-1.5 bg-[#333]" />
                <input
                    type="range"
                    aria-label="显示比例"
                    min="10"
                    max="240"
                    value={zoom}
                    onChange={(e) => setZoom(e.target.value)}
                    className="w-[100px] h-4 appearance-none bg-[linear-gradient(#333,#333)] bg-[length:100%_1px] bg-center bg-no-repeat [&::-webkit-slider-thumb]:appearance-none [&::-webkit-slider-thumb]:w-[5px] [&::-webkit-slider-thumb]:h-[11px] [&::-webkit-slider-thumb]:bg-[#666]"
                />
            </div>
            <button type="button" aria-label="放大" className="ml-[5px] mr-[13px]"><svg width="8" height="9"><path d="M0 4h8v1H0zM3.500 0h1v9h-1z" fill="#333" /></svg></button>
            <output className="w-[40px]">{zoom}%</output>
        </div>
    </footer>
);

const App = () => {
    const [formula, setFormula] = useState("=[@[单片地砖的长度/cm]]*[@[单片地砖的宽度/cm]]");
    const [zoom, setZoom] = useState(145);

    return (
        <div lang="zh-CN" className="flex flex-col h-screen overflow-hidden bg-[#e6e6e6] font-['Noto_Sans','Noto_Sans_CJK_SC',sans-serif]">
            <header className="relative bg-[#217346]">
                <HeaderPattern />
                <div className="relative">
                    <TitleBar />
                    <TabBar />
                </div>
            </header>
            <Ribbon />
            <FormulaBar formula={formula} setFormula={setFormula} />
            <Sheet />
            <SheetTabs />
            <StatusBar zoom={zoom} setZoom={setZoom} />
        </div>
    );
};

export default App;
